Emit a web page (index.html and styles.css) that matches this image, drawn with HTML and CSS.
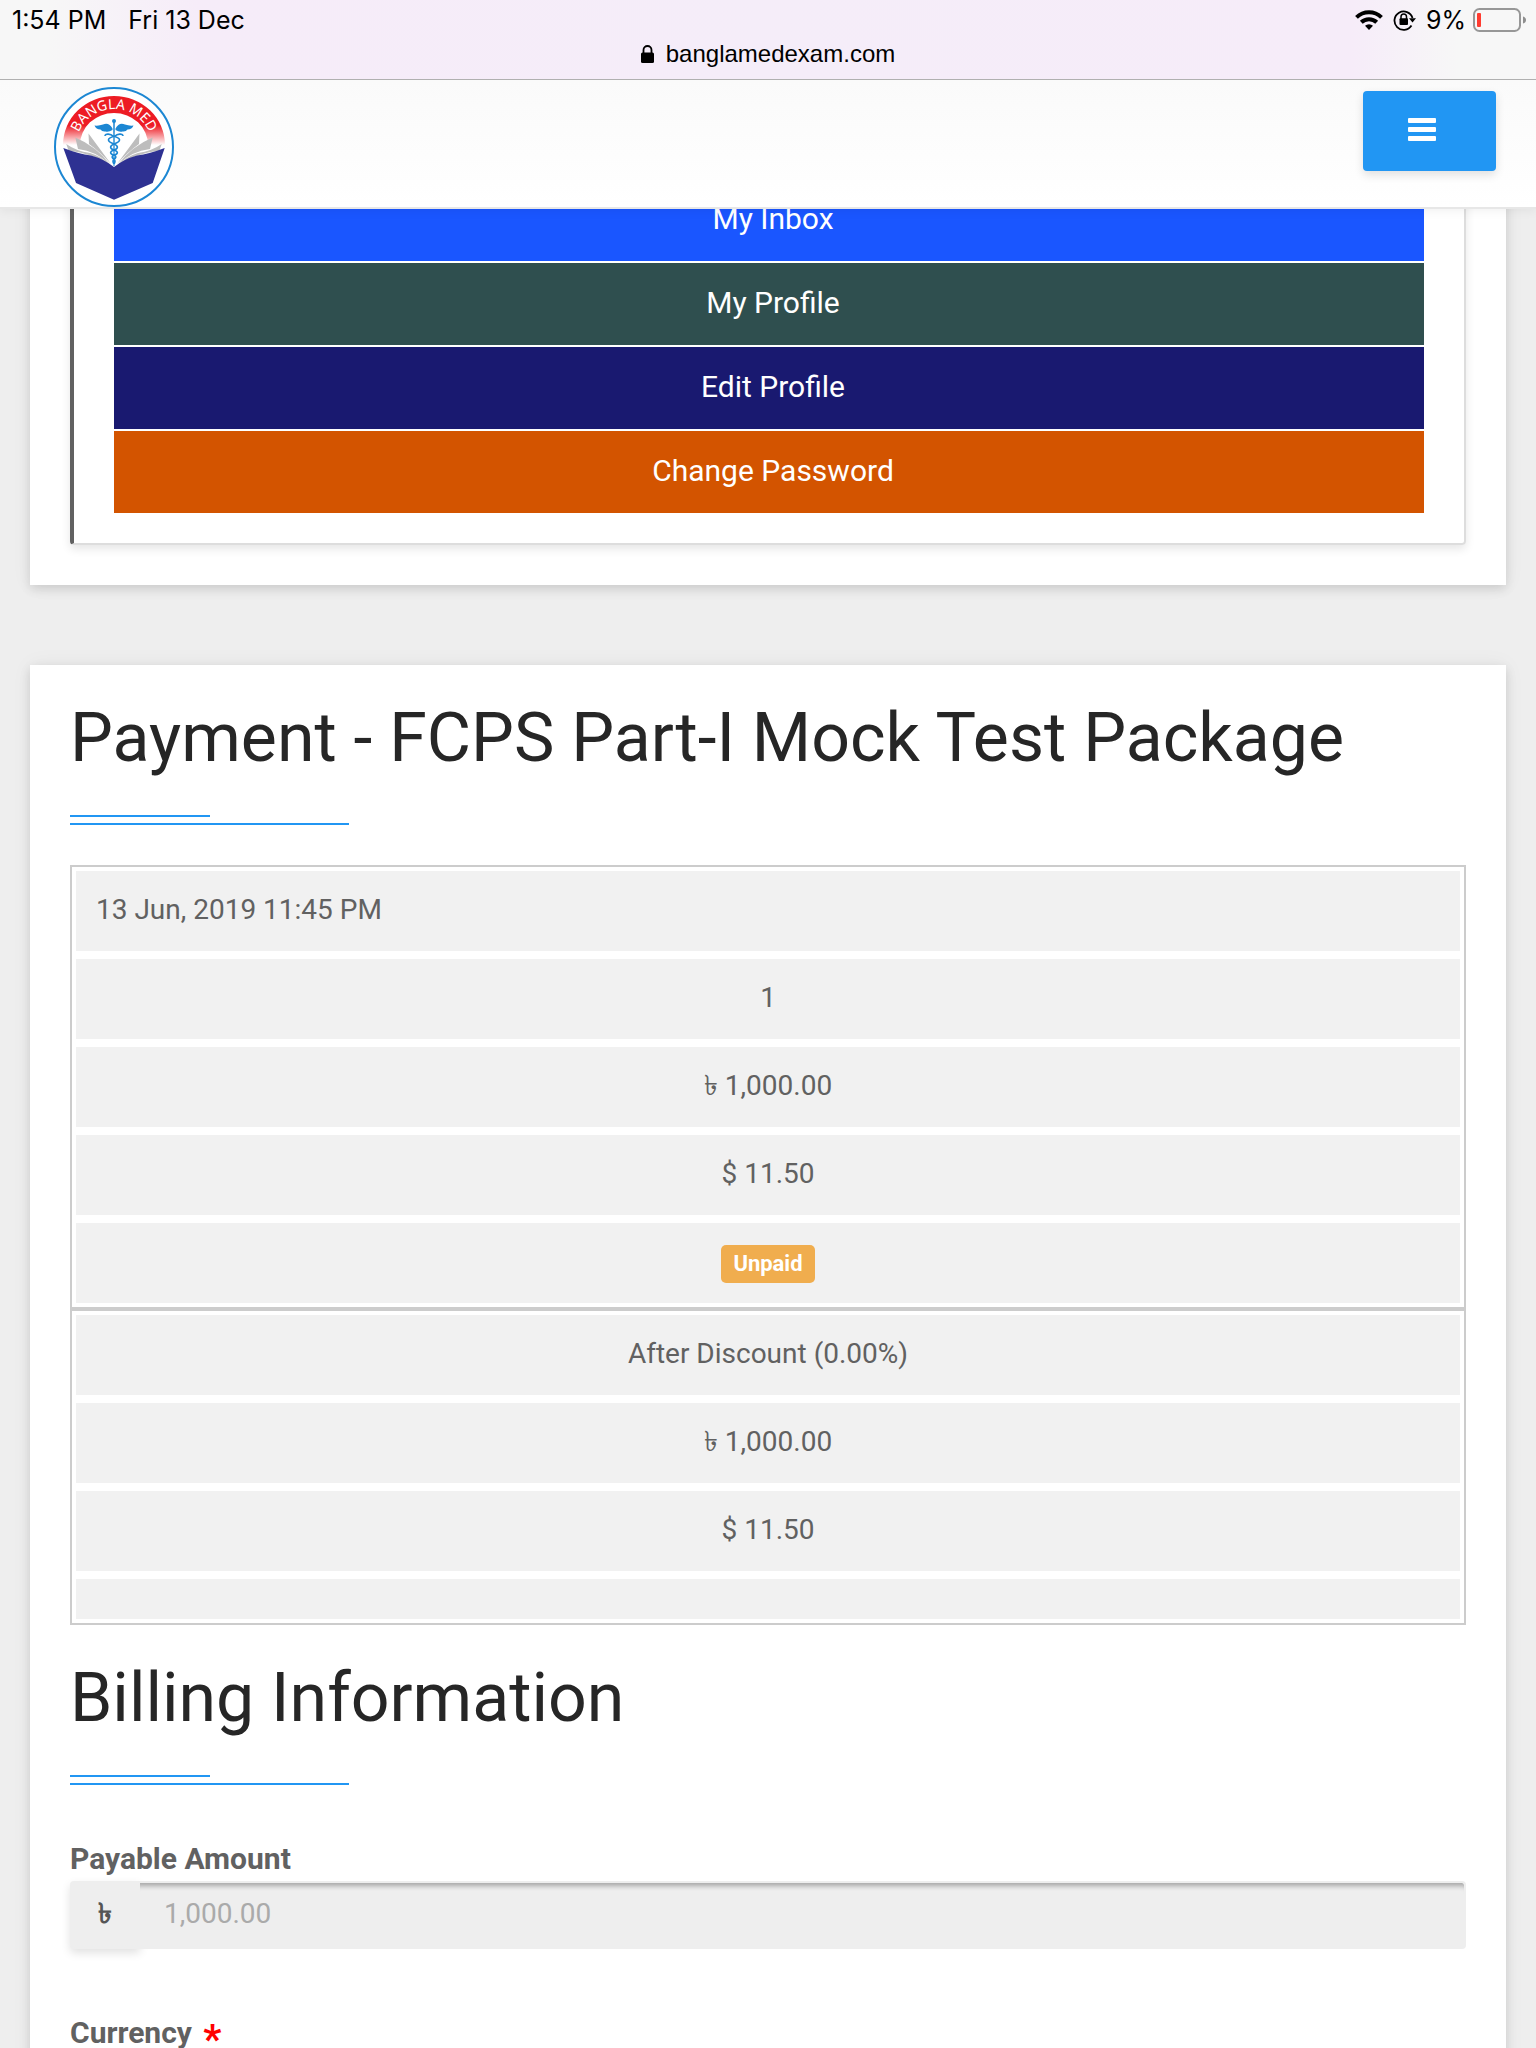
FILE: index.html
```html
<!DOCTYPE html>
<html lang="en">
<head>
<meta charset="utf-8">
<meta name="viewport" content="width=device-width, initial-scale=1">
<title>Payment - Bangla Med Exam</title>
<link rel="stylesheet" href="styles.css">
</head>
<body>
<div class="top">
  <div class="browser">
    <div class="status">
      <span>1:54 PM</span>
      <span>Fri 13 Dec</span>
      <span class="status-right">
        <svg width="28" height="20" viewBox="0 0 28 20" aria-hidden="true"><g fill="none" stroke="#000" stroke-width="4"><path d="M1.5 7.4a18 18 0 0 1 25 0"/><path d="M6.3 12.3a11 11 0 0 1 15.4 0"/></g><path d="M14 20l-4-4.200a5.800 5.800 0 0 1 8 0z"/></svg>
        <svg class="rotate" width="24" height="22" viewBox="0 0 24 22" aria-hidden="true"><path d="M18.500 16.500a9.200 9.200 0 1 1 1-7.500" fill="none" stroke="#000" stroke-width="1.800"/><path d="M16 9.200h7l-3.500 4.300z"/><rect x="6.500" y="9.300" width="8.500" height="6.700" rx="1"/><path d="M8 10V7.700a2.750 2.800 0 0 1 5.500 0V10" fill="none" stroke="#000" stroke-width="1.500"/></svg>
        <span>9%</span>
        <svg width="54" height="24" viewBox="0 0 54 24" aria-hidden="true"><rect x="1" y="1" width="46" height="22" rx="5.500" fill="none" stroke="#979797" stroke-width="2"/><rect x="4" y="5" width="4" height="14" rx="1" fill="#ff3b30"/><path d="M50 8.500q3 1 3 3.500t-3 3.500z" fill="#8e8e8e"/></svg>
      </span>
    </div>
    <div class="address">
      <svg width="13" height="18" viewBox="0 0 13 18" aria-hidden="true"><rect y="7.500" width="13" height="10.500" rx="1.500"/><path d="M2.500 8.500V5a4 4 0 0 1 8 0v3.500" fill="none" stroke="#000" stroke-width="1.800"/></svg>
      <span>banglamedexam.com</span>
    </div>
  </div>
  <header class="navbar">
    <a href="#" class="brand" aria-label="Home">
      <svg width="120" height="120" viewBox="0 0 120 120">
        <defs>
          <linearGradient id="arc" x1="0" y1="0" x2="0" y2="1"><stop offset="0" stop-color="#ed1c24"/><stop offset=".6" stop-color="#ed1c24"/><stop offset="1" stop-color="#fff"/></linearGradient>
          <path id="arcText" d="M22 60a38 38 0 0 1 76 0"/>
        </defs>
        <circle cx="60" cy="60" r="59" fill="#fff" stroke="#1c87d3" stroke-width="2"/>
        <path d="M9 58a51 49 0 0 1 102 0h-17a34 32 0 0 0-68 0z" fill="url(#arc)"/>
        <text class="brand-text"><textPath href="#arcText" startOffset="50%" text-anchor="middle">BANGLA MED</textPath></text>
        <g id="pages" fill="#bdbdbd">
          <path d="M34.500 46.500 57 77Q45 64 35 57z"/>
          <path d="M21.300 50.500Q42 59 56 77.500 42 64 24 62z"/>
          <path d="M12.300 57Q22 64 36 66 47 69 57 79 38 66 14.500 63.500z"/>
          <path d="M85.500 46.500 63 77Q75 64 85 57z"/>
          <path d="M98.700 50.500Q78 59 64 77.500 78 64 96 62z"/>
          <path d="M107.700 57Q98 64 84 66 73 69 63 79 82 66 105.500 63.500z"/>
        </g>
        <path d="M9.300 61Q25 67 37 68.500 50 72 60 80 70 72 83 68.500 95 67 110.700 61L98.700 96 60 112.700 22 96z" fill="#2e3192"/>
        <g fill="#1c87d3">
          <circle cx="60" cy="34" r="2"/>
          <path d="M59.200 34h1.600l-.3 45h-1z"/>
          <path d="M58.500 41.500Q55 35 49 37.500 45 39 40.500 38.500q1.500 4 6 4 1.500 2.500 5 2 3 1 7-1.500z"/>
          <path d="M61.500 41.500Q65 35 71 37.500 75 39 79.500 38.500q-1.500 4-6 4-1.500 2.500-5 2-3 1-7-1.500z"/>
        </g>
        <g fill="none" stroke="#1c87d3" stroke-width="1.600">
          <path d="M51 49c0-3 6-2 8 0 8 2 9 5 1 8-5 2-4 5 0 6 5 2 4 4 0 5-3 1-2 3 0 4 2 2 1 3 0 5"/>
          <path d="M69 49c0-3-6-2-8 0-8 2-9 5-1 8 5 2 4 5 0 6-5 2-4 4 0 5 3 1 2 3 0 4-2 2-1 3 0 5"/>
        </g>
      </svg>
    </a>
    <button type="button" class="menu" aria-label="Menu">
      <svg width="28" height="26" viewBox="0 0 28 26" fill="#fff" aria-hidden="true"><rect width="28" height="5" rx="1"/><rect y="9" width="28" height="5" rx="1"/><rect y="18" width="28" height="5" rx="1"/></svg>
    </button>
  </header>
</div>
<main class="page">
  <section class="card">
    <nav class="panel">
      <a href="#" class="inbox">My Inbox</a>
      <a href="#" class="profile">My Profile</a>
      <a href="#" class="edit">Edit Profile</a>
      <a href="#" class="password">Change Password</a>
    </nav>
  </section>
  <section class="card">
    <h1 class="title">Payment - FCPS Part-I Mock Test Package</h1>
    <table class="orders">
      <tbody>
        <tr>
          <td class="date">13 Jun, 2019 11:45 PM</td>
          <td>1</td>
          <td>৳ 1,000.00</td>
          <td>$ 11.50</td>
          <td><span class="badge">Unpaid</span></td>
        </tr>
        <tr>
          <td>After Discount (0.00%)</td>
          <td>৳ 1,000.00</td>
          <td>$ 11.50</td>
          <td></td>
        </tr>
      </tbody>
    </table>
    <h2 class="title">Billing Information</h2>
    <form class="billing">
      <div class="field">
        <label for="amount">Payable Amount</label>
        <div class="group">
          <span class="addon">৳</span>
          <input id="amount" type="text" value="1,000.00" disabled>
        </div>
      </div>
      <div class="field">
        <label for="currency">Currency <span class="required">*</span></label>
        <select id="currency"><option>BDT</option><option>USD</option></select>
      </div>
    </form>
  </section>
</main>
</body>
</html>
```
FILE: styles.css
```css
* { box-sizing: border-box; }

body {
  margin: 0;
  background: #eee;
  color: #616161;
  font-family: Roboto, "Noto Sans", sans-serif;
  font-size: 28px;
  line-height: 36px;
}

.top {
  position: fixed;
  top: 0;
  left: 0;
  right: 0;
  z-index: 10;
  box-shadow: 0 2px 10px rgba(0, 0, 0, .06);
}

.browser {
  height: 80px;
  border-bottom: 1px solid #b0b0b0;
  background: linear-gradient(90deg, #f7f7f7 0%, #f7f7f7 3%, #f6ecf9 13%, #f5edf9 50%, #f6ecf9 88%, #f7f7f7 95%);
  color: #000;
  font-family: Inter, sans-serif;
  font-size: 25px;
}

.status {
  display: flex;
  align-items: center;
  gap: 22px;
  height: 40px;
  padding: 0 9px 0 12px;
}

.status-right {
  display: flex;
  align-items: center;
  gap: 7px;
  margin-left: auto;
}

.rotate { margin: 0 2px 0 3px; }

.address {
  display: flex;
  align-items: center;
  justify-content: center;
  gap: 12px;
  height: 28px;
  font-family: "Liberation Sans", sans-serif;
  font-size: 24px;
}

.navbar {
  display: flex;
  justify-content: space-between;
  align-items: flex-start;
  height: 129px;
  padding: 7px 40px 0 54px;
  border-bottom: 2px solid #e7e7e7;
  background: linear-gradient(#fafafa, #fff);
}

.brand svg { display: block; }

.brand-text {
  fill: #fff;
  font-family: "Noto Sans", sans-serif;
  font-size: 14px;
}

.menu {
  display: flex;
  align-items: center;
  height: 80px;
  margin-top: 4px;
  padding: 0 60px 0 45px;
  border: 0;
  border-radius: 4px;
  background: #2196f3;
  box-shadow: 0 4px 10px rgba(0, 0, 0, .12);
}

.page {
  display: flex;
  flex-direction: column;
  gap: 80px;
  padding: 107px 30px 80px;
}

.card {
  padding: 40px;
  background: #fff;
  box-shadow: 0 4px 10px rgba(0, 0, 0, .12), 0 0 20px rgba(0, 0, 0, .05);
}

.panel {
  display: flex;
  flex-direction: column;
  gap: 2px;
  padding: 30px 40px;
  border: 2px solid #ddd;
  border-left: 4px solid #616161;
  border-radius: 4px;
  box-shadow: 0 4px 10px rgba(0, 0, 0, .1);
}

.panel a {
  height: 82px;
  padding: 20px 0 0 8px;
  color: #fff;
  font-size: 30px;
  line-height: 40px;
  text-align: center;
  text-decoration: none;
}

.inbox { background: #1a56ff; }
.profile { background: #2f4f4f; }
.edit { background: #191970; }
.password { background: #d35400; }

/* Heading with a short and a long rule under it */
.title {
  display: flex;
  flex-direction: column;
  margin: 0 0 40px;
  color: #262626;
  font-size: 68px;
  font-weight: 400;
  line-height: 66px;
}

.title::before,
.title::after {
  content: "";
  border-bottom: 2px solid #2196f3;
}

.title::before {
  order: 1;
  width: 10%;
  margin-top: 44px;
}

.title::after {
  order: 2;
  width: 20%;
  margin-top: 6px;
}

/* Stacked table: every cell is a row of its own */
.orders,
.orders tbody,
.orders td { display: block; }

.orders { margin-bottom: 40px; }

.orders tr {
  display: flex;
  flex-direction: column;
  gap: 8px;
  padding: 4px;
  border: 2px solid #ccc;
}

.orders td {
  padding: 21px 20px 23px;
  background: #f1f1f1;
  text-align: center;
}

.orders .date { text-align: left; }

.orders td:empty { padding: 20px; }

.badge {
  display: inline-block;
  padding: 0 12px;
  border-radius: 5px;
  background: #f0ad4e;
  color: #fff;
  font-size: 22px;
  font-weight: 700;
  line-height: 38px;
  vertical-align: top;
}

.orders td:has(.badge) { padding: 22px 20px 20px; }

.billing {
  display: flex;
  flex-direction: column;
  gap: 64px;
  padding-top: 14px;
}

.field label {
  display: block;
  height: 42px;
  font-size: 30px;
  font-weight: 700;
  line-height: 40px;
}

.required {
  margin-left: 4px;
  color: #f00;
  font-size: 40px;
  line-height: 20px;
  vertical-align: -10px;
}

.group { display: flex; }

.addon {
  width: 70px;
  padding: 15px 0 17px;
  border-radius: 4px 0 0 4px;
  background: #eee;
  box-shadow: 0 4px 10px rgba(0, 0, 0, .12);
  color: #555;
  font-weight: 700;
  text-align: center;
}

.group input {
  flex: 1;
  min-width: 0;
  height: 68px;
  padding: 0 24px 4px;
  border: 2px solid #eee;
  border-radius: 0 4px 4px 0;
  border-left: 0;
  background: #eee;
  box-shadow: inset 0 8px 5px -5px rgba(0, 0, 0, .3);
  color: #aaa;
  font: inherit;
}

.field select {
  width: 100%;
  height: 68px;
  padding: 0 24px;
  border: 2px solid #ddd;
  border-radius: 4px;
  background: #fff;
  color: inherit;
  font: inherit;
}
```
